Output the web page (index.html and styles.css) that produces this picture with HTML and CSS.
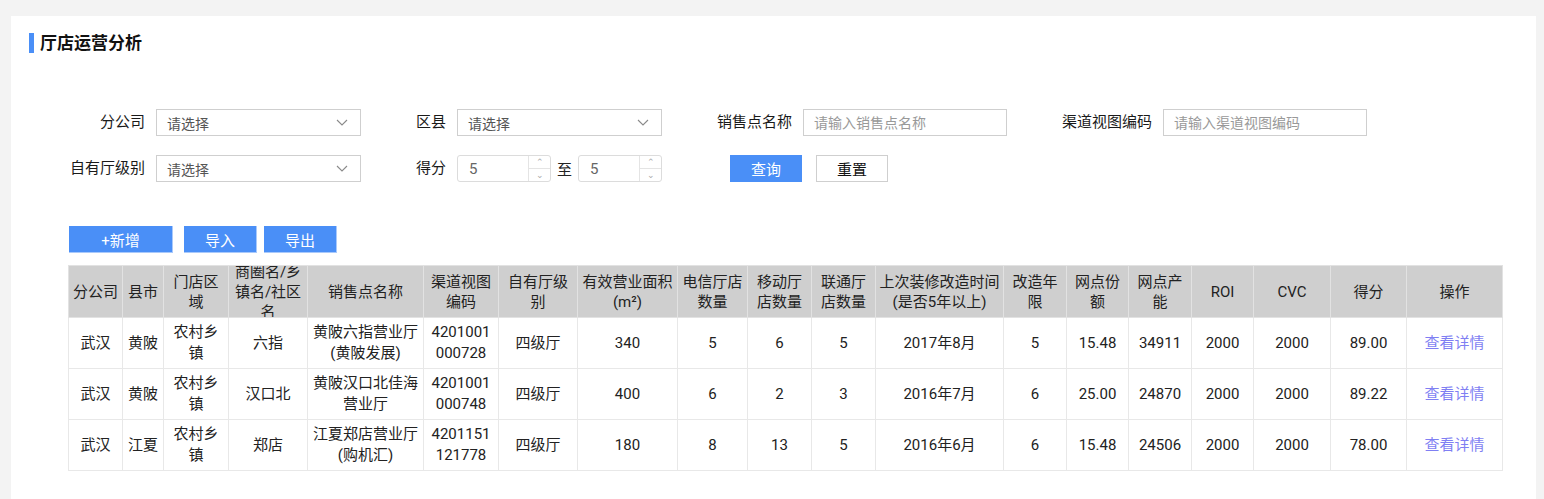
FILE: index.html
```html
<!DOCTYPE html>
<html lang="zh-CN">
<head>
<meta charset="utf-8">
<title>厅店运营分析</title>
<link rel="stylesheet" href="styles.css">
</head>
<body>
<div class="card">
  <h2 class="title"><span class="title-bar"></span>厅店运营分析</h2>

  <form class="filters">
    <div class="frow">
      <div class="field">
        <label class="flabel w96">分公司</label>
        <div class="select w205"><span>请选择</span><svg class="chev" viewBox="0 0 12 7" width="12" height="7"><path d="M1 1 L6 6 L11 1" fill="none" stroke="#8a8a8a" stroke-width="1.1"/></svg></div>
      </div>
      <div class="field">
        <label class="flabel w96">区县</label>
        <div class="select w205"><span>请选择</span><svg class="chev" viewBox="0 0 12 7" width="12" height="7"><path d="M1 1 L6 6 L11 1" fill="none" stroke="#8a8a8a" stroke-width="1.1"/></svg></div>
      </div>
      <div class="field">
        <label class="flabel w141">销售点名称</label>
        <input class="text w204" type="text" placeholder="请输入销售点名称">
      </div>
      <div class="field">
        <label class="flabel w156">渠道视图编码</label>
        <input class="text w204" type="text" placeholder="请输入渠道视图编码">
      </div>
    </div>
    <div class="frow row2">
      <div class="field">
        <label class="flabel w96">自有厅级别</label>
        <div class="select w205"><span>请选择</span><svg class="chev" viewBox="0 0 12 7" width="12" height="7"><path d="M1 1 L6 6 L11 1" fill="none" stroke="#8a8a8a" stroke-width="1.1"/></svg></div>
      </div>
      <div class="field">
        <label class="flabel w96">得分</label>
        <div class="num w94"><span class="num-val">5</span><span class="spin"><span class="up">&#8963;</span><span class="down">&#8964;</span></span></div>
        <span class="to">至</span>
        <div class="num w84"><span class="num-val">5</span><span class="spin"><span class="up">&#8963;</span><span class="down">&#8964;</span></span></div>
      </div>
      <div class="actions">
        <button type="button" class="btn btn-primary">查询</button>
        <button type="button" class="btn btn-default">重置</button>
      </div>
    </div>
  </form>

  <div class="toolbar">
    <button type="button" class="tbtn add">+新增</button>
    <button type="button" class="tbtn imp">导入</button>
    <button type="button" class="tbtn exp">导出</button>
  </div>

  <table class="grid">
    <colgroup>
      <col style="width:54px"><col style="width:41px"><col style="width:65px"><col style="width:79px"><col style="width:116px"><col style="width:75px"><col style="width:79px"><col style="width:100px"><col style="width:70px"><col style="width:64px"><col style="width:64px"><col style="width:128px"><col style="width:63px"><col style="width:62px"><col style="width:63px"><col style="width:62px"><col style="width:77px"><col style="width:76px"><col style="width:96px">
    </colgroup>
    <thead>
      <tr>
        <th><div class="hc">分公司</div></th>
        <th><div class="hc">县市</div></th>
        <th><div class="hc">门店区域</div></th>
        <th><div class="hc">商圈名/乡镇名/社区名</div></th>
        <th><div class="hc">销售点名称</div></th>
        <th><div class="hc">渠道视图编码</div></th>
        <th><div class="hc">自有厅级别</div></th>
        <th><div class="hc">有效营业面积(m²)</div></th>
        <th><div class="hc">电信厅店数量</div></th>
        <th><div class="hc">移动厅店数量</div></th>
        <th><div class="hc">联通厅店数量</div></th>
        <th><div class="hc tight">上次装修改造时间(是否5年以上)</div></th>
        <th><div class="hc">改造年限</div></th>
        <th><div class="hc">网点份额</div></th>
        <th><div class="hc">网点产能</div></th>
        <th><div class="hc">ROI</div></th>
        <th><div class="hc">CVC</div></th>
        <th><div class="hc">得分</div></th>
        <th><div class="hc">操作</div></th>
      </tr>
    </thead>
    <tbody>
      <tr>
        <td>武汉</td><td>黄陂</td><td>农村乡镇</td><td>六指</td><td>黄陂六指营业厅(黄陂发展)</td><td>4201001000728</td><td>四级厅</td><td>340</td><td>5</td><td>6</td><td>5</td><td>2017年8月</td><td>5</td><td>15.48</td><td>34911</td><td>2000</td><td>2000</td><td>89.00</td><td><a class="link" href="#">查看详情</a></td>
      </tr>
      <tr>
        <td>武汉</td><td>黄陂</td><td>农村乡镇</td><td>汉口北</td><td>黄陂汉口北佳海营业厅</td><td>4201001000748</td><td>四级厅</td><td>400</td><td>6</td><td>2</td><td>3</td><td>2016年7月</td><td>6</td><td>25.00</td><td>24870</td><td>2000</td><td>2000</td><td>89.22</td><td><a class="link" href="#">查看详情</a></td>
      </tr>
      <tr>
        <td>武汉</td><td>江夏</td><td>农村乡镇</td><td>郑店</td><td>江夏郑店营业厅(购机汇)</td><td>4201151121778</td><td>四级厅</td><td>180</td><td>8</td><td>13</td><td>5</td><td>2016年6月</td><td>6</td><td>15.48</td><td>24506</td><td>2000</td><td>2000</td><td>78.00</td><td><a class="link" href="#">查看详情</a></td>
      </tr>
    </tbody>
  </table>
</div>
</body>
</html>
```

FILE: styles.css
```css
* { box-sizing: border-box; }
html, body { margin: 0; padding: 0; }
body {
  background: #f3f3f3;
  font-family: Roboto, "Noto Sans CJK SC", sans-serif;
  color: #222;
  font-size: 15px;
  height: 499px;
  overflow: hidden;
}
.card {
  margin: 16px 8px 0 11px;
  background: #fff;
  min-height: 500px;
  padding-top: 17px;
}
.title {
  margin: 0 0 0 18px;
  display: flex;
  align-items: center;
  height: 20px;
  font-size: 17px;
  font-weight: bold;
  color: #111;
  line-height: 20px;
}
.title-bar {
  display: inline-block;
  width: 5px;
  height: 20px;
  background: #4a8ff7;
  margin-right: 6px;
}
.filters { margin: 56px 0 0 49px; }
.frow { display: flex; align-items: center; height: 27px; }
.row2 { margin-top: 19px; }
.field { display: flex; align-items: center; }
.flabel {
  text-align: right;
  padding-right: 11px;
  font-size: 15px;
  color: #1a1a1a;
  line-height: 27px;
}
.w96 { width: 96px; }
.w141 { width: 141px; }
.w156 { width: 156px; }
.w205 { width: 205px; }
.w204 { width: 204px; }
.w94 { width: 94px; }
.w84 { width: 84px; }
.select {
  height: 27px;
  border: 1px solid #cfcfcf;
  display: flex;
  align-items: center;
  justify-content: space-between;
  padding: 0 12px 0 10px;
  font-size: 14px;
  color: #555;
}
.chev { display: block; }
.text {
  height: 27px;
  border: 1px solid #cfcfcf;
  padding: 0 10px;
  font-family: inherit;
  font-size: 14px;
  color: #333;
  outline: none;
}
.text::placeholder { color: #999; }
.num {
  height: 27px;
  border: 1px solid #dcdcdc;
  border-radius: 3px;
  display: flex;
  align-items: stretch;
  overflow: hidden;
}
.num-val {
  flex: 1;
  padding-left: 11px;
  font-size: 15px;
  color: #666;
  line-height: 27px;
}
.spin {
  width: 22px;
  border-left: 1px solid #e4e4e4;
  display: flex;
  flex-direction: column;
}
.spin span {
  flex: 1;
  display: flex;
  align-items: center;
  justify-content: center;
  font-size: 9px;
  color: #aaa;
  line-height: 1;
}
.spin .up { border-bottom: 1px solid #e4e4e4; }
.to { width: 27px; text-align: center; font-size: 15px; color: #222; }
.actions { display: flex; margin-left: 68px; }
.btn {
  width: 72px;
  height: 27px;
  font-family: inherit;
  font-size: 15px;
  padding: 0;
  cursor: pointer;
}
.btn-primary { background: #4a8ff7; border: 1px solid #4a8ff7; color: #fff; }
.btn-default { background: #fff; border: 1px solid #cfcfcf; color: #111; margin-left: 14px; }
.toolbar { display: flex; margin: 44px 0 0 58px; height: 27px; }
.tbtn {
  height: 27px;
  background: #4a8ff7;
  border: none;
  border-right: 1px solid #a9c9fb;
  border-bottom: 1px solid #a9c9fb;
  color: #fff;
  font-family: inherit;
  font-size: 15px;
  padding: 0;
}
.add { width: 104px; }
.imp { width: 73px; margin-left: 11px; }
.exp { width: 73px; margin-left: 7px; }
.grid {
  margin: 12px 0 0 57px;
  border-collapse: collapse;
  table-layout: fixed;
  width: 1435px;
  font-size: 15px;
  color: #222;
}
.grid th {
  background: #cfcfcf;
  border: 1px solid #e2e2e2;
  padding: 0;
  font-weight: normal;
  color: #222;
}
.grid th .hc {
  height: 51px;
  display: flex;
  align-items: center;
  justify-content: center;
  text-align: center;
  overflow: hidden;
  line-height: 20px;
  padding: 0 4px;
}
.grid th .hc.tight { padding: 0 1px; }
.grid td {
  border: 1px solid #e8e8e8;
  height: 51px;
  padding: 0 4px;
  text-align: center;
  line-height: 21px;
  word-break: break-all;
}
.link { color: #7f7ff3; text-decoration: none; }
```
